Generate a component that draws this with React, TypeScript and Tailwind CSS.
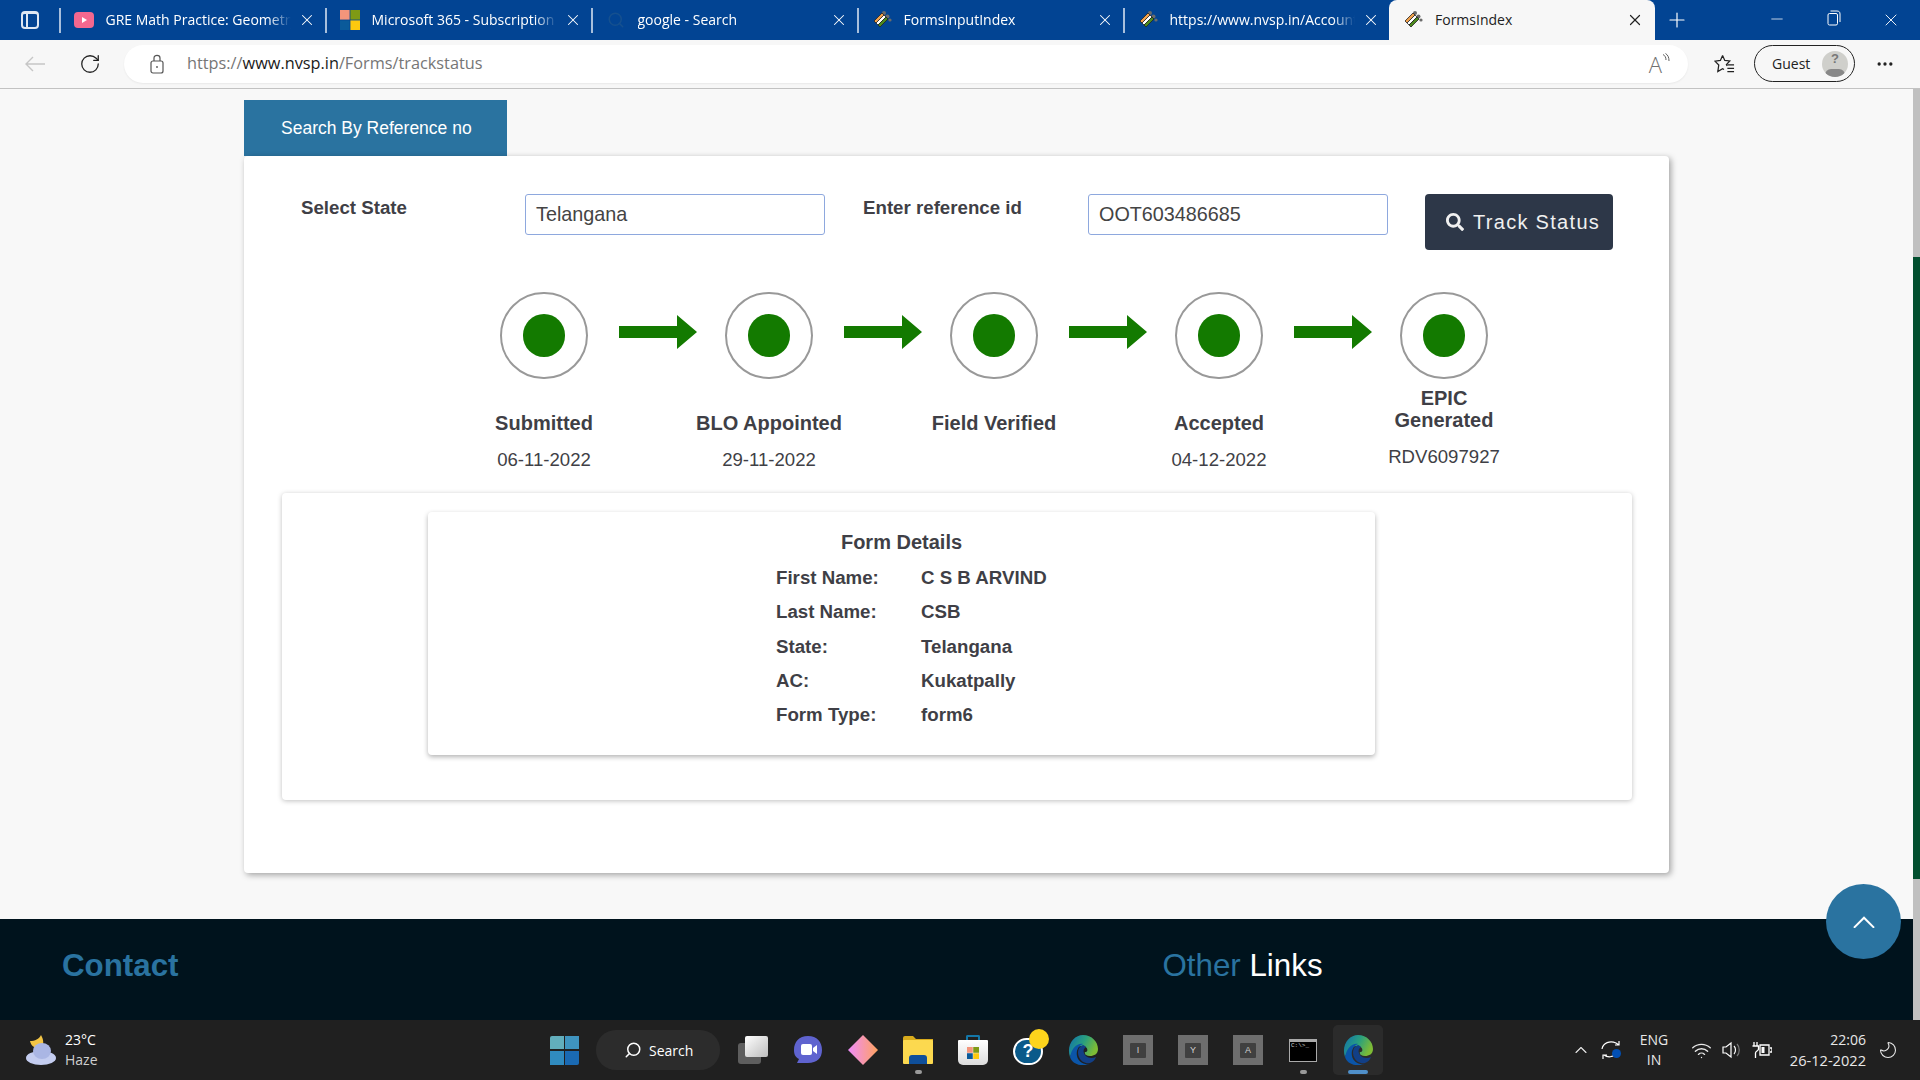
import type { ReactNode } from 'react';
import { ChevronUp, Minus, MoreHorizontal, Moon, Plus, RotateCw, Search, Wifi, X } from 'lucide-react';
import { FaSearch } from 'react-icons/fa';

function EciIcon() {
  return (
    <svg viewBox="0 0 20 20" className="w-5 h-5">
      <circle cx="12" cy="3" r="2" fill="#6b6b6b" />
      <circle cx="15.5" cy="6.5" r="2" fill="#6b6b6b" />
      <circle cx="18" cy="10" r="1.6" fill="#6b6b6b" />
      <path d="M2 11 L10 3 L12 5 L4 13 Z" fill="#f0a04b" stroke="#222" strokeWidth="0.8" />
      <path d="M4 13 L12 5 L14 7 L6 15 Z" fill="#fff" stroke="#222" strokeWidth="0.8" />
      <path d="M6 15 L14 7 L16 9 L8 17 Z" fill="#4c8a1e" stroke="#222" strokeWidth="0.8" />
    </svg>
  );
}

function MsIcon({ size = 20 }: { size?: number }) {
  return (
    <svg viewBox="0 0 20 20" width={size} height={size}>
      <rect x="0" y="0" width="9.6" height="9.6" fill="#f3957b" />
      <rect x="10.4" y="0" width="9.6" height="9.6" fill="#7f9a15" />
      <rect x="0" y="10.4" width="9.6" height="9.6" fill="#0a5a9a" />
      <rect x="10.4" y="10.4" width="9.6" height="9.6" fill="#fdc90f" />
    </svg>
  );
}

function YoutubeIcon() {
  return (
    <svg viewBox="0 0 20 16" className="w-5 h-4">
      <rect width="20" height="16" rx="4" fill="#f4688f" />
      <path d="M8 5 L13 8 L8 11 Z" fill="#fff" />
    </svg>
  );
}

function EdgeIcon() {
  return (
    <svg viewBox="0 0 30 30" className="w-[30px] h-[30px]">
      <defs>
        <linearGradient id="edgeTop" x1="0" y1="0" x2="1" y2="0.4">
          <stop offset="0" stopColor="#0f6fb0" />
          <stop offset="0.55" stopColor="#2aa07e" />
          <stop offset="1" stopColor="#7dbb35" />
        </linearGradient>
      </defs>
      <path d="M15 0 C24 0 30 7 30 14 C30 19 26 21 22 21 C18 21 16 19 17 17 C21 17 20 11 14 11 C7 11 4 17 2 22 C-2 10 6 0 15 0 Z" fill="url(#edgeTop)" />
      <path d="M2 22 C4 13 9 8 15 9 C10 11 8 16 9 21 C10 26 15 30 21 29 C13 32 4 29 2 22 Z" fill="#0b55a8" />
      <path d="M15 10 C10 12 9 17 11 22 C13 27 18 29 22 28 C25 27 27 25 28 22 C24 24 19 23 17 20 C15 17 15 14 18 12 C17 11 16 10 15 10 Z" fill="#123f86" />
    </svg>
  );
}

const tabs: { title: string; icon: ReactNode }[] = [
  { title: 'GRE Math Practice: Geometry', icon: <YoutubeIcon /> },
  { title: 'Microsoft 365 - Subscription', icon: <MsIcon /> },
  { title: 'google - Search', icon: <Search size={18} strokeWidth={2} className="text-[#15508f]" /> },
  { title: 'FormsInputIndex', icon: <EciIcon /> },
  { title: 'https://www.nvsp.in/Accounts', icon: <EciIcon /> },
];

function TabStrip() {
  return (
    <div className="flex h-10 bg-[#024493] text-white items-center">
      <div className="w-[59px] flex justify-center pl-[1px]">
        <div className="w-[18px] h-[18px] rounded-[4px] border-2 border-[#dfe8f3] border-t-[3px] flex">
          <div className="w-[3px] border-r-2 border-[#dfe8f3] box-content" />
        </div>
      </div>
      {tabs.map((t) => (
        <div key={t.title} className="w-[266px] h-10 flex items-center relative">
          <div className="w-[1.5px] h-[25px] bg-[#a8bfdc]" />
          <div className="w-5 ml-[13px] flex justify-center shrink-0">{t.icon}</div>
          <div className="ml-3 -mt-[2px] w-[185px] overflow-hidden whitespace-nowrap text-[14px] font-['Open_Sans',sans-serif] [mask-image:linear-gradient(to_right,black_88%,transparent)]">
            {t.title}
          </div>
          <X size={18} strokeWidth={1.4} className="absolute right-[9px] top-[11px]" />
        </div>
      ))}
      <div className="w-[266px] h-10 bg-[#f7f7f7] rounded-t-lg text-[#222] flex items-center relative">
        <div className="w-5 ml-[14px] flex justify-center shrink-0"><EciIcon /></div>
        <div className="ml-3 -mt-[2px] text-[14px] font-['Open_Sans',sans-serif]">FormsIndex</div>
        <X size={18} strokeWidth={1.6} className="absolute right-[11px] top-[11px]" />
      </div>
      <div className="w-11 flex justify-center"><Plus size={24} strokeWidth={1.2} /></div>
      <div className="ml-auto flex">
        <div className="w-[57px] flex justify-center"><Minus size={18} strokeWidth={1} /></div>
        <div className="w-[57px] flex justify-center">
          <svg viewBox="0 0 14 16" className="w-[14px] h-4 fill-none stroke-white">
            <rect x="1" y="3.5" width="9.5" height="11.5" rx="1.5" />
            <path d="M3.5 1 H10 C12 1 13 2 13 4 V12" />
          </svg>
        </div>
        <div className="w-[58px] flex justify-center"><X size={20} strokeWidth={1.1} /></div>
      </div>
    </div>
  );
}

function Toolbar() {
  return (
    <div className="flex h-[49px] items-center bg-[#f7f7f7] border-b border-[#c2c2c2] pb-[1px]">
      <svg viewBox="0 0 20 16" className="w-5 h-4 ml-[25px] fill-none stroke-[#c6c6c6] stroke-[1.4]">
        <path d="M20 8 H1 M8 1 L1 8 L8 15" />
      </svg>
      <RotateCw size={22} strokeWidth={1.4} className="ml-[34px] text-[#222]" />
      <div className="ml-[23px] w-[1564px] h-[38px] rounded-full bg-white flex items-center shadow-[0_1px_2px_rgba(0,0,0,0.06)]">
        <svg viewBox="0 0 14 20" className="ml-[26px] w-[14px] h-5 fill-none stroke-[#555] stroke-[1.2]">
          <rect x="1" y="7" width="12" height="12" rx="2" />
          <path d="M4 7 V4 C4 0.5 10 0.5 10 4 V7" />
          <circle cx="7" cy="13" r="0.9" fill="#555" stroke="none" />
        </svg>
        <div className="ml-[23px] text-[16.3px] text-[#767676] font-['Open_Sans',sans-serif]">
          https://<span className="text-[#1a1a1a]">www.nvsp.in</span>/Forms/trackstatus
        </div>
        <div className="ml-auto mr-[18px] flex items-start text-[#707070]">
          <span className="text-[22px] leading-none font-['Open_Sans',sans-serif] font-light">A</span>
          <svg viewBox="0 0 8 11" className="w-2 h-[11px] fill-none stroke-[#606060]">
            <path d="M1 1.5 C3 2.5 4 4.5 4 7 M3.5 0.5 C6 2 7 4.5 7 8" />
          </svg>
        </div>
      </div>
      <svg viewBox="0 0 22 20" className="ml-[26px] w-[21px] h-5 fill-none stroke-[#222] stroke-[1.3]">
        <path d="M9 1 L11.3 6.3 L16.5 6.8 L13 10.5 L13.8 12 M9 1 L6.7 6.3 L1 7 L5 11 L4 18 L9 15 L10.5 15.8" />
        <path d="M14 11 H21 M14 14.5 H21 M14 18 H21" />
      </svg>
      <div className="ml-[19px] w-[101px] h-[37px] rounded-full border-[1.5px] border-[#222] flex items-center">
        <span className="ml-[17px] text-[14px] text-[#222] font-['Open_Sans',sans-serif]">Guest</span>
        <div className="ml-auto mr-[6px] w-[26px] h-[26px] rounded-full bg-[#cfcfcb] overflow-hidden relative flex justify-center">
          <span className="text-[13px] font-bold text-[#777] leading-[15px] font-['Liberation_Sans',sans-serif]">?</span>
          <div className="absolute bottom-[-4px] left-[3px] w-5 h-[12px] rounded-full bg-[#888888]" />
        </div>
      </div>
      <MoreHorizontal size={20} strokeWidth={2} className="ml-5 text-[#222]" />
    </div>
  );
}

function Arrow() {
  return (
    <div className="w-[137px] pl-[31px] pt-[23px]">
      <svg viewBox="0 0 78 34" className="w-[78px] h-[34px]">
        <polygon points="0,11 58,11 58,0 78,17 58,34 58,23 0,23" fill="#137a00" />
      </svg>
    </div>
  );
}

function Circle() {
  return (
    <div className="w-[88px] h-[87px] rounded-full border-2 border-[#999999] flex items-center justify-center shrink-0">
      <div className="w-[42px] h-[43px] rounded-full bg-[#137a00]" />
    </div>
  );
}

function Step({ title, sub, top }: { title: ReactNode; sub?: string; top: string }) {
  return (
    <div className={`w-[225px] flex flex-col items-center text-center ${top}`}>
      <div className="text-[20px] leading-[22px] font-bold text-[#3f3f46]">{title}</div>
      {sub && <div className="mt-[13px] text-[18.6px] leading-[26px] text-[#3f3f46]">{sub}</div>}
    </div>
  );
}

const details = [
  ['First Name:', 'C S B ARVIND'],
  ['Last Name:', 'CSB'],
  ['State:', 'Telangana'],
  ['AC:', 'Kukatpally'],
  ['Form Type:', 'form6'],
];

function TrackCard() {
  return (
    <div className="w-[1425px] h-[717px] bg-white rounded-[4px] shadow-[2px_2px_6px_rgba(0,0,0,0.35)] pt-[38px]">
      <div className="flex pl-[57px] text-[#3f3f46]">
        <div className="w-[224px] text-[18.7px] leading-[27px] font-bold">Select State</div>
        <div className="w-[300px] h-[41px] rounded-[3px] border border-[#8ea8de] pl-[10px] flex items-center text-[19.8px] text-[#444]">Telangana</div>
        <div className="ml-[38px] w-[225px] text-[18.7px] leading-[27px] font-bold">Enter reference id</div>
        <div className="w-[300px] h-[41px] rounded-[3px] border border-[#8ea8de] pl-[10px] flex items-center text-[19.8px] text-[#444]">OOT603486685</div>
        <div className="ml-[37px] w-[188px] h-[56px] rounded-[4px] bg-[#2d3748] text-[#f0f0f0] flex items-center pl-[21px] text-[20px] tracking-[1.3px]">
          <FaSearch size={18} />
          <span className="ml-[9px]">Track Status</span>
        </div>
      </div>

      <div className="flex pl-[256px] mt-[42px]">
        <Circle />
        <Arrow />
        <Circle />
        <Arrow />
        <Circle />
        <Arrow />
        <Circle />
        <Arrow />
        <Circle />
      </div>

      <div className="flex pl-[187.5px] h-[114px]">
        <Step top="pt-[33px]" title="Submitted" sub="06-11-2022" />
        <Step top="pt-[33px]" title="BLO Appointed" sub="29-11-2022" />
        <Step top="pt-[33px]" title="Field Verified" />
        <Step top="pt-[33px]" title="Accepted" sub="04-12-2022" />
        <Step top="pt-[8px]" title={<>EPIC<br />Generated</>} sub="RDV6097927" />
      </div>

      <div className="ml-[38px] w-[1350px] h-[307px] bg-white rounded-[4px] shadow-[0_1px_5px_rgba(0,0,0,0.25)] pt-[19px] pl-[146px]">
        <div className="w-[947px] h-[243px] bg-white rounded-[4px] shadow-[0_2px_5px_rgba(0,0,0,0.3)] pt-[17px] text-[#3f3f46]">
          <div className="text-center text-[20px] leading-[26px] font-bold">Form Details</div>
          <div className="mt-[6px] pl-[348px]">
            {details.map(([k, v]) => (
              <div key={k} className="flex h-[34.25px] items-center text-[18.7px] font-bold">
                <div className="w-[145px]">{k}</div>
                <div>{v}</div>
              </div>
            ))}
          </div>
        </div>
      </div>
    </div>
  );
}

function Footer() {
  return (
    <div className="mt-[46px] h-[101px] bg-[#00131d] flex pl-[62px] pt-[27px] text-[31.3px] leading-[40px]">
      <div className="w-[1100.5px] font-bold text-[#2a73a0]">Contact</div>
      <div className="text-[#2a73a0]">
        Other <span className="text-white">Links</span>
      </div>
    </div>
  );
}

function TaskView() {
  return (
    <div className="relative w-[30px] h-7">
      <div className="absolute left-0 bottom-0 w-[23px] h-[21px] rounded-[3px] bg-[#5e5e5e]" />
      <div className="absolute right-0 top-0 w-[23px] h-[21px] rounded-[2px] bg-gradient-to-br from-white to-[#bdbdbd]" />
    </div>
  );
}

function ChatIcon() {
  return (
    <svg viewBox="0 0 30 30" className="w-[30px] h-[30px]">
      <path d="M15 1 C24 1 29 7 29 15 C29 23 24 28 15 28 H4 L6 24 C2 22 1 19 1 15 C1 7 6 1 15 1 Z" fill="#5f63cf" />
      <rect x="8" y="9" width="11" height="11" rx="2" fill="#fff" />
      <path d="M20 13 L24 10 V19 L20 16 Z" fill="#fff" />
    </svg>
  );
}

function DiamondIcon() {
  return (
    <svg viewBox="0 0 30 30" className="w-[30px] h-[30px]">
      <defs>
        <linearGradient id="dia" x1="0" y1="0" x2="1" y2="0">
          <stop offset="0" stopColor="#ee8cfa" />
          <stop offset="1" stopColor="#ffa25f" />
        </linearGradient>
      </defs>
      <polygon points="15,0 30,15 15,30 0,15" fill="url(#dia)" />
    </svg>
  );
}

function FolderIcon() {
  return (
    <svg viewBox="0 0 30 28" className="w-[30px] h-7">
      <path d="M0 2 Q0 0 2 0 H10 L13 3 H30 V8 H0 Z" fill="#d8ab1c" />
      <rect x="0" y="4" width="30" height="24" rx="1" fill="#fcd94f" />
      <path d="M6 28 V22 Q6 19 9 19 H21 Q24 19 24 22 V28 Z" fill="#0f4f9a" />
    </svg>
  );
}

function StoreIcon() {
  return (
    <div className="relative w-[30px] h-[30px]">
      <div className="absolute left-2 top-0 w-[14px] h-2 border-2 border-b-0 border-[#1477a8] rounded-t-[2px]" />
      <div className="absolute left-0 bottom-0 w-[30px] h-[25px] bg-gradient-to-b from-white to-[#dcdcdc] rounded-b-[5px] rounded-t-[1px] flex items-center justify-center">
        <MsIcon size={12} />
      </div>
    </div>
  );
}

function HelpIcon() {
  return (
    <div className="relative w-[30px] h-[30px]">
      <div className="absolute left-0 top-[3px] w-[30px] h-[27px] rounded-full bg-[#0a5a8a] border-2 border-white flex items-center justify-center text-white font-bold text-[18px] font-['Liberation_Sans',sans-serif]">?</div>
      <div className="absolute left-4 -top-[6px] w-5 h-5 rounded-full bg-[#fdd41c]" />
    </div>
  );
}

function KeyIcon({ letter }: { letter: string }) {
  return (
    <div className="w-[30px] h-[30px] bg-[#6e6e6e] flex items-center justify-center">
      <div className="w-4 h-[15px] bg-[#404040] rounded-[1px] text-[9px] leading-[15px] text-center text-[#d0d0d0] font-['Liberation_Sans',sans-serif]">{letter}</div>
    </div>
  );
}

function CmdIcon() {
  return (
    <div className="w-[28px] h-[23px] bg-black border border-[#aaaaaa] border-t-[3px] text-[6px] leading-[8px] text-[#cccccc] pl-[1px] font-['Liberation_Mono',monospace]">C:\&gt;_</div>
  );
}

function Slot({ children, dot, active }: { children: ReactNode; dot?: boolean; active?: boolean }) {
  return (
    <div className="w-[55px] h-[60px] flex items-center justify-center relative">
      {active && <div className="absolute left-[2.5px] top-[5px] w-[50px] h-[50px] rounded-[5px] bg-[#2b2b2b]" />}
      <div className="relative">{children}</div>
      {dot && <div className="absolute left-[24px] bottom-[6px] w-[7px] h-1 rounded-full bg-[#9a9a9a]" />}
      {active && <div className="absolute left-[17.5px] bottom-[6px] w-5 h-1 rounded-full bg-[#4f8fc9]" />}
    </div>
  );
}

function Taskbar() {
  return (
    <div className="h-[60px] bg-[#202020] flex items-center text-white font-['Open_Sans',sans-serif]">
      <div className="w-[550px] flex items-center pl-[26px]">
        <svg viewBox="0 0 30 30" className="w-[30px] h-[30px]">
          <path d="M15 0 C13 4 9 6 4 6 C5 11 9 14 15 13 C18 11 18 5 15 0 Z" fill="#f3c546" />
          <ellipse cx="15" cy="23" rx="15" ry="7" fill="#c4cdf0" />
          <ellipse cx="16" cy="16" rx="9" ry="8" fill="#aab6e4" />
        </svg>
        <div className="ml-[9px] leading-[20px]">
          <div className="text-[14px]">23°C</div>
          <div className="text-[14px] text-[#cfcfcf]">Haze</div>
        </div>
      </div>
      <div className="w-[29px] h-[29px] grid grid-cols-2 gap-[1.5px]">
        <div className="bg-[#62aebc] rounded-tl-[2px]" />
        <div className="bg-[#3f94bf]" />
        <div className="bg-[#308bbf]" />
        <div className="bg-[#1a6ab3] rounded-br-[2px]" />
      </div>
      <div className="ml-[17px] w-[124px] h-10 rounded-full bg-[#2c2c2c] flex items-center pl-7">
        <Search size={18} strokeWidth={2} className="-scale-x-100" />
        <span className="ml-[7px] text-[14px]">Search</span>
      </div>
      <div className="ml-[5.5px] flex">
        <Slot><TaskView /></Slot>
        <Slot><ChatIcon /></Slot>
        <Slot><DiamondIcon /></Slot>
        <Slot dot><FolderIcon /></Slot>
        <Slot><StoreIcon /></Slot>
        <Slot><HelpIcon /></Slot>
        <Slot><EdgeIcon /></Slot>
        <Slot><KeyIcon letter="I" /></Slot>
        <Slot><KeyIcon letter="Y" /></Slot>
        <Slot><KeyIcon letter="A" /></Slot>
        <Slot dot><CmdIcon /></Slot>
        <Slot active><EdgeIcon /></Slot>
      </div>
      <div className="ml-[185.5px] flex items-center text-[14px] text-[#e8e8e8]">
        <ChevronUp size={22} strokeWidth={1.3} className="w-5" />
        <div className="relative ml-[10px] w-5 h-5">
          <svg viewBox="0 0 20 20" className="w-5 h-5 fill-none stroke-white stroke-[1.2]">
            <path d="M1 9 C2 3 9 0 15 3 L18 5 M18 1 V5 H14 M15 14 C12 17 7 18 3 15 M2 19 V15 H6" />
          </svg>
          <div className="absolute right-0 bottom-[2px] w-[9px] h-[9px] rounded-full bg-[#024fb3]" />
        </div>
        <div className="w-[66px] text-center leading-[20px]">
          <div>ENG</div>
          <div>IN</div>
        </div>
        <Wifi size={21} strokeWidth={1.6} className="ml-1" />
        <svg viewBox="0 0 20 18" className="ml-[10px] w-5 h-[18px] fill-none stroke-white stroke-[1.2]">
          <path d="M1 6 H4 L9 2 V16 L4 12 H1 Z" />
          <path d="M12 5 C14 7 14 11 12 13" />
          <path d="M15 3 C18 6 18 12 15 15" stroke="#777" />
        </svg>
        <svg viewBox="0 0 20 16" className="ml-[10px] w-5 h-4 fill-none stroke-white stroke-[1.3]">
          <path d="M2 0 V4 M5 0 V4 M0.5 4 H6.5 V7 C6.5 9 3.5 9 3.5 11 V16" />
          <path d="M8 3 H17 V13 H8 Z M18 6 H20 V10 H18" />
          <rect x="9.5" y="5" width="3" height="6" fill="#fff" stroke="none" />
        </svg>
        <div className="w-[94px] text-right leading-[20px]">
          <div>22:06</div>
          <div className="text-[14.6px]">26-12-2022</div>
        </div>
        <Moon size={20} strokeWidth={1.3} className="ml-[12px] -scale-x-100" />
      </div>
    </div>
  );
}

export default function App() {
  return (
    <div className="w-[1920px] h-[1080px] flex flex-col overflow-hidden bg-[#f8f8f8] font-['Liberation_Sans',Arial,sans-serif] relative">
      <TabStrip />
      <Toolbar />
      <div className="h-[931px] flex">
        <div className="flex-1 pt-[11px]">
          <div className="ml-[244px]">
            <div className="w-[263px] h-[56px] bg-[#2a73a0] text-white text-[17.5px] flex items-center pl-[37px]">
              Search By Reference no
            </div>
            <TrackCard />
          </div>
          <Footer />
        </div>
        <div className="w-[7px] bg-[#c0c0c0] flex flex-col">
          <div className="h-[168px]" />
          <div className="h-[622px] bg-[#024f2f]" />
        </div>
      </div>
      <div className="absolute left-[1826px] top-[884px] w-[75px] h-[75px] rounded-full bg-[#2a73a0] flex items-center justify-center">
        <svg viewBox="0 0 24 14" className="w-[22px] h-3 fill-none stroke-white stroke-[2.4]" strokeLinecap="round">
          <path d="M1 13 L12 2 L23 13" />
        </svg>
      </div>
      <Taskbar />
    </div>
  );
}
